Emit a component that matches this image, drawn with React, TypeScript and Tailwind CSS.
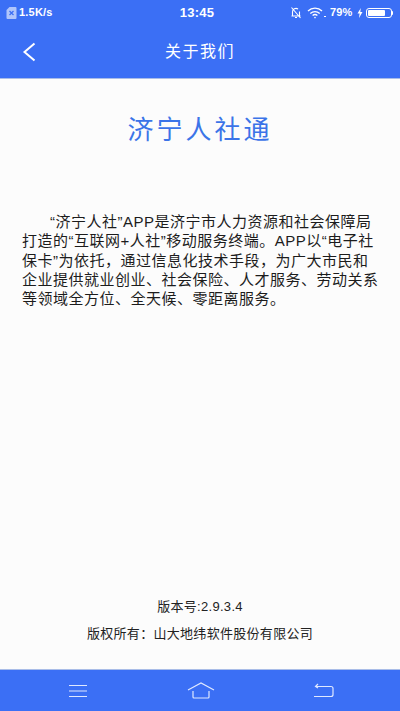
const font = { fontFamily: '"Liberation Sans", "Noto Sans CJK SC", sans-serif' };

function StatusBar() {
  return (
    <div className="flex h-[25px] items-center justify-between pl-[6px] pr-[7px] text-white">
      <div className="flex w-[120px] items-center gap-[2px]">
        <svg width="11" height="13" viewBox="0 0 11 13" className="opacity-60">
          <path d="M3.5 1h6a1 1 0 0 1 1 1v10a1 1 0 0 1-1 1h-8a1 1 0 0 1-1-1V4z" fill="#fff" />
          <path d="M3.5 5l4 4M7.5 5l-4 4" stroke="#3b6ff5" strokeWidth="1.3" />
        </svg>
        <span className="text-[11px] font-bold leading-none tracking-[0.2px]">1.5K/s</span>
      </div>
      <span className="text-[13px] font-bold leading-none tracking-[0.3px]">13:45</span>
      <div className="flex w-[125px] items-center justify-end">
        <svg width="12" height="13" viewBox="0 0 12 13" fill="none" stroke="#fff" strokeWidth="1.1" className="mr-[5px]">
          <path d="M2.5 10V6a3.5 3.5 0 0 1 5.5-3M9.5 5.5V10M1.5 10h9M5 11.5h2M1.5 1.5l9 10.5" />
        </svg>
        <svg width="16" height="12" viewBox="0 0 16 12" fill="none" stroke="#fff" strokeWidth="1.3">
          <path d="M1 4a10 10 0 0 1 14 0M3.3 6.4a7 7 0 0 1 9.4 0M5.6 8.6a3.6 3.6 0 0 1 4.8 0" />
          <circle cx="8" cy="10.6" r="0.8" fill="#fff" stroke="none" />
        </svg>
        <span className="ml-[1px] mr-[4px] mt-[8px] h-[1.5px] w-[2px] bg-white" />
        <span className="text-[11px] font-bold leading-none tracking-[0.2px]">79%</span>
        <svg width="6" height="10" viewBox="0 0 6 10" className="ml-[4px]">
          <path d="M3.8 0L0.5 5.6h2.1L2 10l3.5-6H3.3z" fill="#fff" />
        </svg>
        <div className="ml-[3px] flex h-[10px] w-[26px] items-center rounded-[3px] border border-white p-[1px]">
          <div className="h-full w-[80%] rounded-[1px] bg-white" />
        </div>
        <span className="h-[4px] w-[1.5px] rounded-r bg-white" />
      </div>
    </div>
  );
}

export default function App() {
  return (
    <div className="flex h-[711px] w-[400px] flex-col overflow-hidden bg-[#fcfcfc]" style={font}>
      <header className="h-[79px] shrink-0 border-b border-[#a9bde8] bg-[#3b6ff5]">
        <StatusBar />
        <div className="relative flex h-[53px] items-center justify-center">
          <svg width="14" height="20" viewBox="0 0 14 20" fill="none" stroke="#fff" strokeWidth="2" className="absolute left-[22px] top-[17px]">
            <path d="M12.5 1.5L2.5 10l10 8.5" />
          </svg>
          <h1 className="text-[16px] font-normal tracking-[1.5px] text-white">关于我们</h1>
        </div>
      </header>

      <main className="flex flex-1 flex-col">
        <h2 className="mt-[34px] text-center text-[26px] font-normal leading-[34px] tracking-[3px] text-[#3b74e8]">济宁人社通</h2>
        <p className="ml-[22px] mr-[20px] mt-[65px] indent-[28px] text-[15px] leading-[19.3px] tracking-[0.5px] text-[#1c1c1c]">
          “济宁人社”APP是济宁市人力资源和社会保障局<br />打造的“互联网+人社”移动服务终端。APP以“电子社<br />保卡”为依托，通过信息化技术手段，为广大市民和<br />企业提供就业创业、社会保险、人才服务、劳动关系<br />等领域全方位、全天候、零距离服务。
        </p>
        <div className="mt-auto pb-[27px] text-center text-[13px] text-[#222]">
          <p className="leading-[17px] tracking-[0.3px]">版本号:2.9.3.4</p>
          <p className="mt-[10px] leading-[17px] tracking-[0.3px]">版权所有：山大地纬软件股份有限公司</p>
        </div>
      </main>

      <footer className="flex h-[42px] shrink-0 items-center justify-between border-t border-[#a9bde8] bg-[#3b6ff5] pl-[68px] pr-[66px]">
        <svg width="20" height="14" viewBox="0 0 20 14" stroke="#dfe8ff" strokeWidth="1.2">
          <path d="M1 1.5h18M1 7h18M1 12.5h18" />
        </svg>
        <svg width="28" height="17" viewBox="0 0 28 17" fill="none" stroke="#dfe8ff" strokeWidth="1.2">
          <path d="M1 8L14 1l13 7M6 9v6a1 1 0 0 0 1 1h14a1 1 0 0 0 1-1V9" />
        </svg>
        <svg width="21" height="15" viewBox="0 0 21 15" fill="none" stroke="#dfe8ff" strokeWidth="1.2">
          <path d="M3 3.5h15a2 2 0 0 1 2 2v6a2 2 0 0 1-2 2H1" />
          <path d="M5 1L2.5 3.5 5 5" />
        </svg>
      </footer>
    </div>
  );
}
